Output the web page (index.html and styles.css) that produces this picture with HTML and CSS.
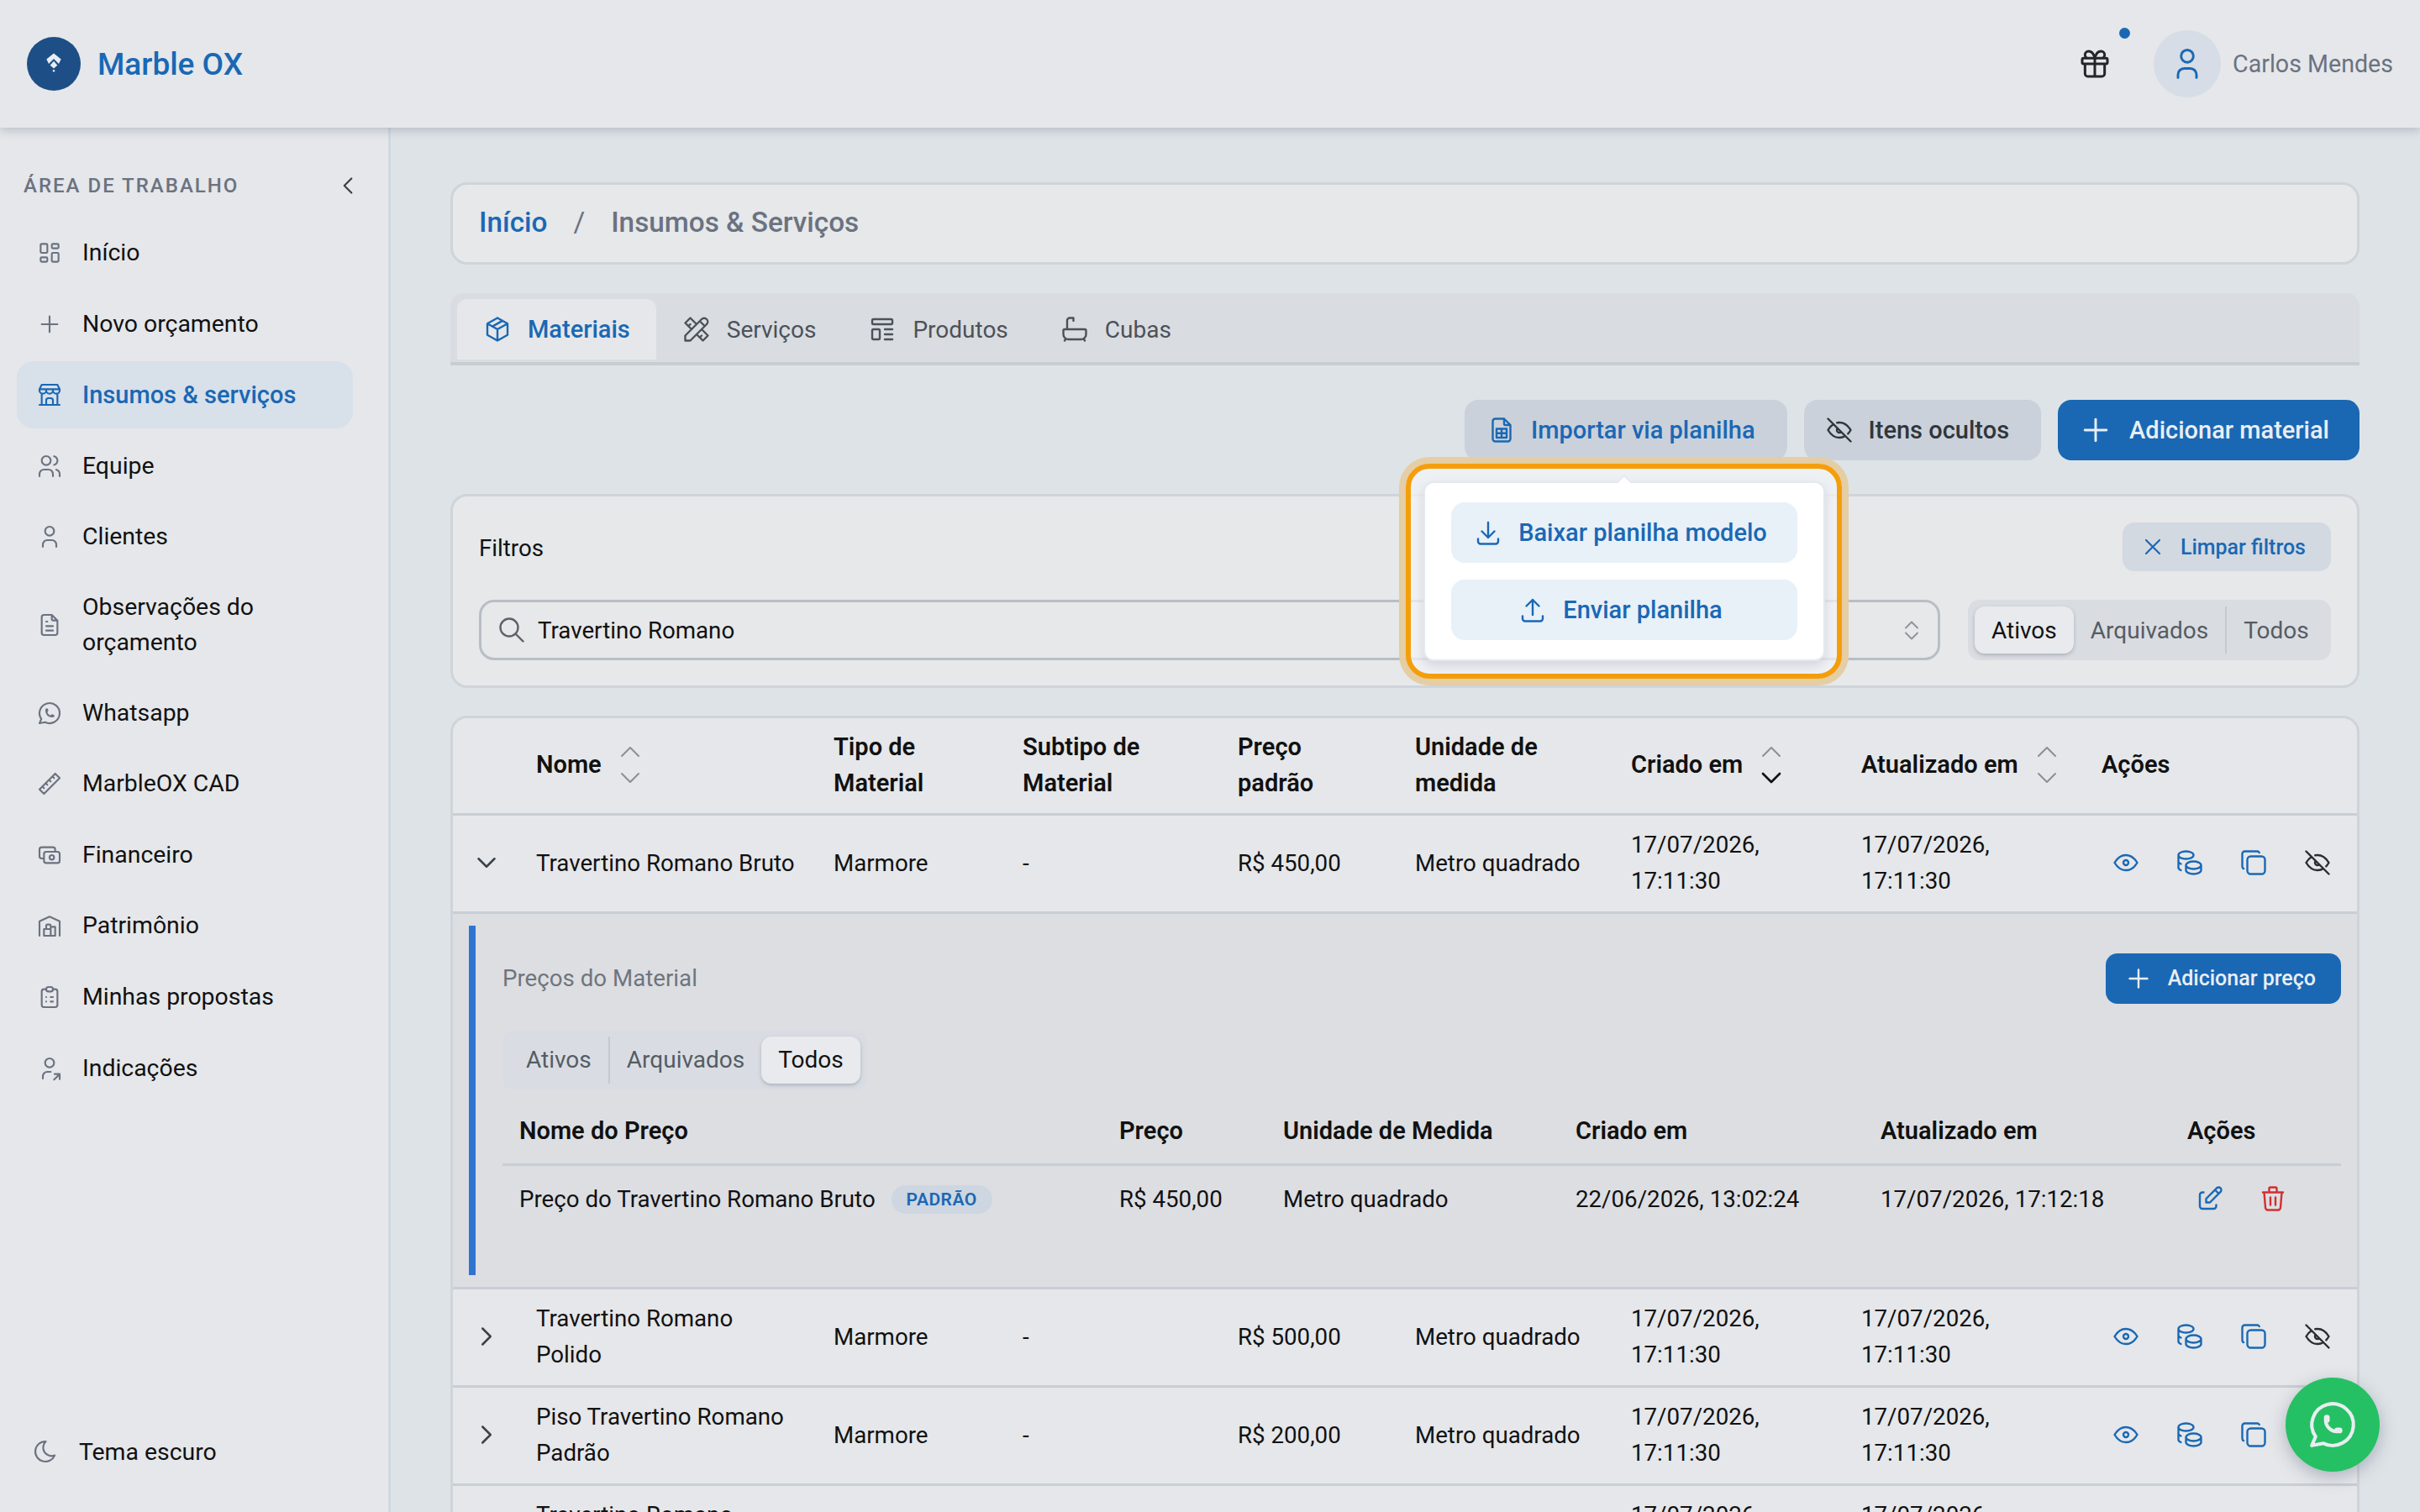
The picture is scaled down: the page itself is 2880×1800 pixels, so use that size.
FILE: index.html
```html
<!DOCTYPE html>
<html lang="pt-BR">
  <head>
    <meta charset="UTF-8" />
    <title>Marble OX</title>
    <link rel="stylesheet" href="styles.css">
  </head>
  <body>
    <svg class="sprite" xmlns="http://www.w3.org/2000/svg">
      <symbol id="i-dash" viewBox="0 0 24 24"><path d="M5 4h4a1 1 0 0 1 1 1v6a1 1 0 0 1-1 1H5a1 1 0 0 1-1-1V5a1 1 0 0 1 1-1M5 16h4a1 1 0 0 1 1 1v2a1 1 0 0 1-1 1H5a1 1 0 0 1-1-1v-2a1 1 0 0 1 1-1M15 12h4a1 1 0 0 1 1 1v6a1 1 0 0 1-1 1h-4a1 1 0 0 1-1-1v-6a1 1 0 0 1 1-1M15 4h4a1 1 0 0 1 1 1v2a1 1 0 0 1-1 1h-4a1 1 0 0 1-1-1V5a1 1 0 0 1 1-1"/></symbol>
      <symbol id="i-plus" viewBox="0 0 24 24"><path d="M12 5v14M5 12h14"/></symbol>
      <symbol id="i-store" viewBox="0 0 24 24"><path d="M3 21h18M3 7v1a3 3 0 0 0 6 0V7m0 1a3 3 0 0 0 6 0V7m0 1a3 3 0 0 0 6 0V7H3l2-4h14l2 4M5 21V10.85M19 21V10.85M9 21v-4a2 2 0 0 1 2-2h2a2 2 0 0 1 2 2v4"/></symbol>
      <symbol id="i-users" viewBox="0 0 24 24"><path d="M5 7a4 4 0 1 0 8 0a4 4 0 1 0-8 0M3 21v-2a4 4 0 0 1 4-4h4a4 4 0 0 1 4 4v2M16 3.13a4 4 0 0 1 0 7.75M21 21v-2a4 4 0 0 0-3-3.85"/></symbol>
      <symbol id="i-user" viewBox="0 0 24 24"><path d="M8 7a4 4 0 1 0 8 0a4 4 0 0 0-8 0M6 21v-2a4 4 0 0 1 4-4h4a4 4 0 0 1 4 4v2"/></symbol>
      <symbol id="i-note" viewBox="0 0 24 24"><path d="M14 3v4a1 1 0 0 0 1 1h4M17 21H7a2 2 0 0 1-2-2V5a2 2 0 0 1 2-2h7l5 5v11a2 2 0 0 1-2 2zM9 9h1M9 13h6M9 17h6"/></symbol>
      <symbol id="i-whats" viewBox="0 0 24 24"><path d="M3 21l1.65-3.8a9 9 0 1 1 3.4 2.9L3 21M9 10a.5.5 0 0 0 1 0V9a.5.5 0 0 0-1 0v1a5 5 0 0 0 5 5h1a.5.5 0 0 0 0-1h-1a.5.5 0 0 0 0 1"/></symbol>
      <symbol id="i-ruler" viewBox="0 0 24 24"><path d="M17 3l4 4L7 21l-4-4zM16 7l-1.500-1.500M13 10l-1.500-1.500M10 13l-1.500-1.500M7 16l-1.500-1.500"/></symbol>
      <symbol id="i-cash" viewBox="0 0 24 24"><path d="M7 11a2 2 0 0 1 2-2h10a2 2 0 0 1 2 2v6a2 2 0 0 1-2 2H9a2 2 0 0 1-2-2zM12 14a2 2 0 1 0 4 0a2 2 0 1 0-4 0M17 9V7a2 2 0 0 0-2-2H5a2 2 0 0 0-2 2v6a2 2 0 0 0 2 2h2"/></symbol>
      <symbol id="i-ware" viewBox="0 0 24 24"><path d="M3 21V8l9-4l9 4v13M13 13h4v8H7v-6h6M13 21v-9a1 1 0 0 0-1-1h-2a1 1 0 0 0-1 1v3"/></symbol>
      <symbol id="i-clip" viewBox="0 0 24 24"><path d="M9 5H7a2 2 0 0 0-2 2v12a2 2 0 0 0 2 2h10a2 2 0 0 0 2-2V7a2 2 0 0 0-2-2h-2M9 5a2 2 0 0 1 2-2h2a2 2 0 0 1 2 2a2 2 0 0 1-2 2h-2a2 2 0 0 1-2-2zM9 12h.01M13 12h2M9 16h.01M13 16h2"/></symbol>
      <symbol id="i-share" viewBox="0 0 24 24"><path d="M8 7a4 4 0 1 0 8 0a4 4 0 0 0-8 0M6 21v-2a4 4 0 0 1 4-4h3M16 22l5-5M21 21.500V17h-4.500"/></symbol>
      <symbol id="i-moon" viewBox="0 0 24 24"><path d="M12 3h.393a7.500 7.500 0 0 0 7.920 12.446a9 9 0 1 1-8.313-12.454z"/></symbol>
      <symbol id="i-gift" viewBox="0 0 24 24"><path d="M3 9a1 1 0 0 1 1-1h16a1 1 0 0 1 1 1v2a1 1 0 0 1-1 1H4a1 1 0 0 1-1-1zM12 8v13M19 12v7a2 2 0 0 1-2 2H7a2 2 0 0 1-2-2v-7M7.500 8a2.500 2.500 0 0 1 0-5A4.800 8 0 0 1 12 8a4.800 8 0 0 1 4.500-5a2.500 2.500 0 0 1 0 5"/></symbol>
      <symbol id="i-box" viewBox="0 0 24 24"><path d="M12 3l8 4.500v9L12 21l-8-4.500v-9L12 3M12 12l8-4.500M12 12v9M12 12L4 7.500M16 5.250l-8 4.500"/></symbol>
      <symbol id="i-tools" viewBox="0 0 24 24"><path d="M3 21h4L20 8a1.500 1.500 0 0 0-4-4L3 17v4M14.500 5.500l4 4M12 8L7 3L3 7l5 5M7 8L5.500 9.500M16 12l5 5l-4 4l-5-5M16 17l-1.500 1.500"/></symbol>
      <symbol id="i-list" viewBox="0 0 24 24"><path d="M4 5a1 1 0 0 1 1-1h14a1 1 0 0 1 1 1v2a1 1 0 0 1-1 1H5a1 1 0 0 1-1-1zM4 13a1 1 0 0 1 1-1h4a1 1 0 0 1 1 1v6a1 1 0 0 1-1 1H5a1 1 0 0 1-1-1zM14 12h6M14 16h6M14 20h6"/></symbol>
      <symbol id="i-bath" viewBox="0 0 24 24"><path d="M4 12h16a1 1 0 0 1 1 1v3a4 4 0 0 1-4 4H7a4 4 0 0 1-4-4v-3a1 1 0 0 1 1-1zM6 12V5a2 2 0 0 1 2-2h3v2.250M4 21l1-1.500M20 21l-1-1.500"/></symbol>
      <symbol id="i-sheet" viewBox="0 0 24 24"><path d="M14 3v4a1 1 0 0 0 1 1h4M17 21H7a2 2 0 0 1-2-2V5a2 2 0 0 1 2-2h7l5 5v11a2 2 0 0 1-2 2zM8 11h8v7H8zM8 14.500h8M12 11v7"/></symbol>
      <symbol id="i-eyeoff" viewBox="0 0 24 24"><path d="M10.585 10.587a2 2 0 0 0 2.829 2.828M16.681 16.673A8.717 8.717 0 0 1 12 18c-3.600 0-6.600-2-9-6c1.272-2.120 2.712-3.678 4.320-4.674m2.860-1.146A9.055 9.055 0 0 1 12 6c3.600 0 6.600 2 9 6c-.666 1.110-1.379 2.067-2.138 2.870M3 3l18 18"/></symbol>
      <symbol id="i-eye" viewBox="0 0 24 24"><path d="M10 12a2 2 0 1 0 4 0a2 2 0 0 0-4 0M21 12c-2.400 4-5.400 6-9 6c-3.600 0-6.600-2-9-6c2.400-4 5.400-6 9-6c3.600 0 6.600 2 9 6"/></symbol>
      <symbol id="i-coins" viewBox="0 0 24 24"><path d="M9 14c0 1.657 2.686 3 6 3s6-1.343 6-3s-2.686-3-6-3s-6 1.343-6 3zM9 14v4c0 1.656 2.686 3 6 3s6-1.344 6-3v-4M3 6c0 1.072 1.144 2.062 3 2.598s4.144.536 6 0c1.856-.536 3-1.526 3-2.598c0-1.072-1.144-2.062-3-2.598s-4.144-.536-6 0C4.144 3.938 3 4.928 3 6zM3 6v10c0 .888.772 1.450 2 2M3 11c0 .888.772 1.450 2 2"/></symbol>
      <symbol id="i-copy" viewBox="0 0 24 24"><path d="M7 9.667A2.667 2.667 0 0 1 9.667 7h8.666A2.667 2.667 0 0 1 21 9.667v8.666A2.667 2.667 0 0 1 18.333 21H9.667A2.667 2.667 0 0 1 7 18.333zM4.012 16.737A2.005 2.005 0 0 1 3 15V5c0-1.100.9-2 2-2h10c.75 0 1.158.385 1.500 1"/></symbol>
      <symbol id="i-edit" viewBox="0 0 24 24"><path d="M7 7H6a2 2 0 0 0-2 2v9a2 2 0 0 0 2 2h9a2 2 0 0 0 2-2v-1M20.385 6.585a2.100 2.100 0 0 0-2.970-2.970L9 12v3h3l8.385-8.415zM16 5l3 3"/></symbol>
      <symbol id="i-trash" viewBox="0 0 24 24"><path d="M4 7h16M10 11v6M14 11v6M5 7l1 12a2 2 0 0 0 2 2h8a2 2 0 0 0 2-2l1-12M9 7V4a1 1 0 0 1 1-1h4a1 1 0 0 1 1 1v3"/></symbol>
      <symbol id="i-down" viewBox="0 0 24 24"><path d="M4 17v2a2 2 0 0 0 2 2h12a2 2 0 0 0 2-2v-2M7 11l5 5l5-5M12 4v12"/></symbol>
      <symbol id="i-up" viewBox="0 0 24 24"><path d="M4 17v2a2 2 0 0 0 2 2h12a2 2 0 0 0 2-2v-2M7 9l5-5l5 5M12 4v12"/></symbol>
      <symbol id="i-search" viewBox="0 0 24 24"><path d="M3 10a7 7 0 1 0 14 0a7 7 0 1 0-14 0M21 21l-6-6"/></symbol>
      <symbol id="i-x" viewBox="0 0 24 24"><path d="M18 6L6 18M6 6l12 12"/></symbol>
      <symbol id="i-left" viewBox="0 0 24 24"><path d="M15 6l-6 6l6 6"/></symbol>
      <symbol id="i-right" viewBox="0 0 24 24"><path d="M9 6l6 6l-6 6"/></symbol>
      <symbol id="i-chev" viewBox="0 0 24 24"><path d="M6 9l6 6l6-6"/></symbol>
      <symbol id="i-caret-up" viewBox="0 0 24 24"><path d="M6 15l6-6l6 6"/></symbol>
    </svg>

    <header class="topbar">
      <div class="brand">
        <span class="brand_logo">
          <svg viewBox="0 2 24 24" class="brand_mark"><path d="M12 2.500l8 6.500-2.500 5L12 8.500 6.500 14 4 9zM12 11l4 4.500-4 3.500-4-3.500zM12 20.200l1.500 1.500-1.500 1.500-1.500-1.500z"/></svg>
        </span>
        <span class="brand_name">Marble OX</span>
      </div>
      <div class="topbar_right">
        <span class="gift">
          <svg class="icon gift_icon"><use href="#i-gift"/></svg>
          <span class="gift_dot"></span>
        </span>
        <span class="avatar"><svg class="icon avatar_icon"><use href="#i-user"/></svg></span>
        <span class="user_name">Carlos Mendes</span>
      </div>
    </header>

    <div class="shell">
      <aside class="sidebar">
        <div class="side_head">
          <span class="side_label">ÁREA DE TRABALHO</span>
          <svg class="icon side_toggle"><use href="#i-left"/></svg>
        </div>
        <nav class="side_nav">
          <a class="nav_item"><svg class="icon"><use href="#i-dash"/></svg><span>Início</span></a>
          <a class="nav_item"><svg class="icon"><use href="#i-plus"/></svg><span>Novo orçamento</span></a>
          <a class="nav_item nav_active"><svg class="icon"><use href="#i-store"/></svg><span>Insumos &amp; serviços</span></a>
          <a class="nav_item"><svg class="icon"><use href="#i-users"/></svg><span>Equipe</span></a>
          <a class="nav_item"><svg class="icon"><use href="#i-user"/></svg><span>Clientes</span></a>
          <a class="nav_item"><svg class="icon"><use href="#i-note"/></svg><span>Observações do<br>orçamento</span></a>
          <a class="nav_item"><svg class="icon"><use href="#i-whats"/></svg><span>Whatsapp</span></a>
          <a class="nav_item"><svg class="icon"><use href="#i-ruler"/></svg><span>MarbleOX CAD</span></a>
          <a class="nav_item"><svg class="icon"><use href="#i-cash"/></svg><span>Financeiro</span></a>
          <a class="nav_item"><svg class="icon"><use href="#i-ware"/></svg><span>Patrimônio</span></a>
          <a class="nav_item"><svg class="icon"><use href="#i-clip"/></svg><span>Minhas propostas</span></a>
          <a class="nav_item"><svg class="icon"><use href="#i-share"/></svg><span>Indicações</span></a>
        </nav>
        <a class="theme_toggle"><svg class="icon"><use href="#i-moon"/></svg><span>Tema escuro</span></a>
      </aside>

      <main class="content">
        <div class="crumbs">
          <span class="crumb_link">Início</span>
          <span class="crumb_sep">/</span>
          <span class="crumb_now">Insumos &amp; Serviços</span>
        </div>

        <div class="tabs">
          <span class="tab tab_active"><svg class="icon"><use href="#i-box"/></svg>Materiais</span>
          <span class="tab"><svg class="icon"><use href="#i-tools"/></svg>Serviços</span>
          <span class="tab"><svg class="icon"><use href="#i-list"/></svg>Produtos</span>
          <span class="tab"><svg class="icon"><use href="#i-bath"/></svg>Cubas</span>
        </div>

        <div class="actions">
          <div class="import_wrap">
            <button class="btn btn_soft btn_import"><svg class="icon"><use href="#i-sheet"/></svg>Importar via planilha</button>
            <div class="highlight">
              <div class="popover">
                <span class="popover_arrow"></span>
                <button class="pop_btn"><svg class="icon"><use href="#i-down"/></svg>Baixar planilha modelo</button>
                <button class="pop_btn"><svg class="icon"><use href="#i-up"/></svg>Enviar planilha</button>
              </div>
            </div>
          </div>
          <button class="btn btn_soft btn_dark"><svg class="icon"><use href="#i-eyeoff"/></svg>Itens ocultos</button>
          <button class="btn btn_primary"><svg class="icon"><use href="#i-plus"/></svg>Adicionar material</button>
        </div>

        <section class="filters">
          <div class="filters_top">
            <span class="filters_title">Filtros</span>
            <button class="btn_clear"><svg class="icon"><use href="#i-x"/></svg>Limpar filtros</button>
          </div>
          <div class="filters_row">
            <div class="search">
              <svg class="icon"><use href="#i-search"/></svg>
              <span class="search_text">Travertino Romano</span>
              <span class="updown">
                <svg class="icon"><use href="#i-caret-up"/></svg>
                <svg class="icon"><use href="#i-chev"/></svg>
              </span>
            </div>
            <div class="segment">
              <span class="seg seg_on">Ativos</span>
              <span class="seg">Arquivados</span>
              <span class="seg seg_div">Todos</span>
            </div>
          </div>
        </section>

        <section class="table_card">
          <table class="grid">
            <colgroup>
              <col class="c_exp"><col class="c_nome"><col class="c_tipo"><col class="c_sub"><col class="c_preco"><col class="c_uni"><col class="c_cri"><col class="c_atu"><col class="c_acao">
            </colgroup>
            <thead>
              <tr>
                <th></th>
                <th><span class="sort">Nome <span class="sort_arrows"><svg class="icon"><use href="#i-caret-up"/></svg><svg class="icon"><use href="#i-chev"/></svg></span></span></th>
                <th>Tipo de<br>Material</th>
                <th>Subtipo de<br>Material</th>
                <th>Preço<br>padrão</th>
                <th>Unidade de<br>medida</th>
                <th><span class="sort">Criado em <span class="sort_arrows"><svg class="icon"><use href="#i-caret-up"/></svg><svg class="icon sort_on"><use href="#i-chev"/></svg></span></span></th>
                <th><span class="sort">Atualizado em <span class="sort_arrows"><svg class="icon"><use href="#i-caret-up"/></svg><svg class="icon"><use href="#i-chev"/></svg></span></span></th>
                <th>Ações</th>
              </tr>
            </thead>
            <tbody>
              <tr>
                <td class="exp"><svg class="icon"><use href="#i-chev"/></svg></td>
                <td>Travertino Romano Bruto</td>
                <td>Marmore</td>
                <td>-</td>
                <td>R$ 450,00</td>
                <td>Metro quadrado</td>
                <td>17/07/2026,<br>17:11:30</td>
                <td>17/07/2026,<br>17:11:30</td>
                <td><span class="row_icons"><svg class="icon"><use href="#i-eye"/></svg><svg class="icon"><use href="#i-coins"/></svg><svg class="icon"><use href="#i-copy"/></svg><svg class="icon icon_dark"><use href="#i-eyeoff"/></svg></span></td>
              </tr>
              <tr class="detail_row">
                <td colspan="9">
                  <div class="detail">
                    <div class="detail_head">
                      <span class="detail_title">Preços do Material</span>
                      <button class="btn_small"><svg class="icon"><use href="#i-plus"/></svg>Adicionar preço</button>
                    </div>
                    <div class="segment segment_sub">
                      <span class="seg">Ativos</span>
                      <span class="seg seg_div">Arquivados</span>
                      <span class="seg seg_on">Todos</span>
                    </div>
                    <table class="subgrid">
                      <colgroup>
                        <col class="s_nome"><col class="s_preco"><col class="s_uni"><col class="s_cri"><col class="s_atu"><col class="s_acao">
                      </colgroup>
                      <thead>
                        <tr>
                          <th>Nome do Preço</th>
                          <th>Preço</th>
                          <th>Unidade de Medida</th>
                          <th>Criado em</th>
                          <th>Atualizado em</th>
                          <th>Ações</th>
                        </tr>
                      </thead>
                      <tbody>
                        <tr>
                          <td>Preço do Travertino Romano Bruto <span class="badge">PADRÃO</span></td>
                          <td>R$ 450,00</td>
                          <td>Metro quadrado</td>
                          <td>22/06/2026, 13:02:24</td>
                          <td>17/07/2026, 17:12:18</td>
                          <td><span class="price_icons"><svg class="icon"><use href="#i-edit"/></svg><svg class="icon icon_red"><use href="#i-trash"/></svg></span></td>
                        </tr>
                      </tbody>
                    </table>
                  </div>
                </td>
              </tr>
              <tr>
                <td class="exp"><svg class="icon"><use href="#i-right"/></svg></td>
                <td>Travertino Romano<br>Polido</td>
                <td>Marmore</td>
                <td>-</td>
                <td>R$ 500,00</td>
                <td>Metro quadrado</td>
                <td>17/07/2026,<br>17:11:30</td>
                <td>17/07/2026,<br>17:11:30</td>
                <td><span class="row_icons"><svg class="icon"><use href="#i-eye"/></svg><svg class="icon"><use href="#i-coins"/></svg><svg class="icon"><use href="#i-copy"/></svg><svg class="icon icon_dark"><use href="#i-eyeoff"/></svg></span></td>
              </tr>
              <tr>
                <td class="exp"><svg class="icon"><use href="#i-right"/></svg></td>
                <td>Piso Travertino Romano<br>Padrão</td>
                <td>Marmore</td>
                <td>-</td>
                <td>R$ 200,00</td>
                <td>Metro quadrado</td>
                <td>17/07/2026,<br>17:11:30</td>
                <td>17/07/2026,<br>17:11:30</td>
                <td><span class="row_icons"><svg class="icon"><use href="#i-eye"/></svg><svg class="icon"><use href="#i-coins"/></svg><svg class="icon"><use href="#i-copy"/></svg><svg class="icon icon_dark"><use href="#i-eyeoff"/></svg></span></td>
              </tr>
              <tr>
                <td class="exp"><svg class="icon"><use href="#i-right"/></svg></td>
                <td>Travertino Romano<br>Levigado</td>
                <td>Marmore</td>
                <td>-</td>
                <td>R$ 350,00</td>
                <td>Metro quadrado</td>
                <td>17/07/2026,<br>17:11:30</td>
                <td>17/07/2026,<br>17:11:30</td>
                <td><span class="row_icons"><svg class="icon"><use href="#i-eye"/></svg><svg class="icon"><use href="#i-coins"/></svg><svg class="icon"><use href="#i-copy"/></svg><svg class="icon icon_dark"><use href="#i-eyeoff"/></svg></span></td>
              </tr>
            </tbody>
          </table>
        </section>
      </main>
    </div>

    <button class="fab"><svg class="icon"><use href="#i-whats"/></svg></button>
  </body>
</html>
```

FILE: styles.css
```css
* {
  box-sizing: border-box;
}
html,
body {
  margin: 0;
  height: 100%;
  overflow: hidden;
}
body {
  display: flex;
  flex-direction: column;
  background-color: #dee3e7;
  color: #111;
  font-family: Roboto, "Liberation Sans", sans-serif;
  font-size: 27.700px;
  line-height: 43px;
}
.sprite {
  display: none;
}
.icon {
  width: 36px;
  height: 36px;
  flex: none;
  fill: none;
  stroke: currentColor;
  stroke-width: 1.6;
  stroke-linecap: round;
  stroke-linejoin: round;
}
button {
  font: inherit;
  border: none;
  cursor: pointer;
}

/* top bar */
.topbar {
  position: relative;
  z-index: 2;
  display: flex;
  justify-content: space-between;
  align-items: center;
  height: 152px;
  flex: none;
  padding: 0 32px;
  background-color: #e5e7ea;
  box-shadow: 0 4px 10px rgba(90, 100, 120, 0.28);
}
.brand {
  display: flex;
  align-items: center;
  gap: 20px;
}
.brand_logo {
  display: flex;
  justify-content: center;
  align-items: center;
  width: 64px;
  height: 64px;
  border-radius: 50%;
  background-color: #1d4f86;
}
.brand_mark {
  width: 26px;
  height: 26px;
  fill: #e8edf3;
}
.brand_name {
  color: #1a68b4;
  font-size: 37px;
  font-weight: 500;
}
.topbar_right {
  display: flex;
  align-items: center;
}
.gift {
  position: relative;
  display: flex;
  margin-right: 50px;
}
.gift_icon {
  width: 40px;
  height: 40px;
  color: #22262b;
  stroke-width: 1.8;
}
.gift_dot {
  position: absolute;
  top: -23px;
  right: -22px;
  width: 13px;
  height: 13px;
  border-radius: 50%;
  background-color: #1a68b4;
}
.avatar {
  display: flex;
  justify-content: center;
  align-items: center;
  width: 80px;
  height: 80px;
  border-radius: 50%;
  background-color: #d6dde6;
  color: #1a68b4;
}
.avatar_icon {
  width: 44px;
  height: 44px;
}
.user_name {
  margin-left: 14px;
  color: #6b7280;
  font-size: 28.600px;
}

/* sidebar */
.shell {
  display: flex;
  flex: 1;
  min-height: 0;
}
.sidebar {
  display: flex;
  flex-direction: column;
  width: 465px;
  flex: none;
  padding: 48px 42px 32px 20px;
  background-color: #e5e7ea;
  border-right: 3px solid #d0d8e2;
}
.side_head {
  display: flex;
  justify-content: space-between;
  align-items: center;
  height: 42px;
  margin-bottom: 19px;
  padding-left: 8px;
}
.side_label {
  color: #6b7280;
  font-size: 24px;
  font-weight: 500;
  letter-spacing: 2px;
}
.side_toggle {
  width: 34px;
  height: 34px;
  margin-right: -11px;
  color: #3c4249;
}
.side_nav {
  display: flex;
  flex-direction: column;
  gap: 4.6px;
  line-height: 42px;
}
.nav_item,
.theme_toggle {
  display: flex;
  align-items: center;
  gap: 23px;
  min-height: 80px;
  padding: 18px 23px;
  border-radius: 20px;
  color: #111;
  font-size: 28.400px;
}
.nav_item .icon,
.theme_toggle .icon {
  width: 32px;
  height: 32px;
  color: #6b7280;
}
.nav_active {
  background-color: #d8e0ea;
  color: #1a68b4;
  font-size: 29px;
  font-weight: 500;
}
.nav_active .icon {
  color: #1a68b4;
}
.theme_toggle {
  margin-top: auto;
  gap: 24px;
  padding-left: 18px;
}

/* content column */
.content {
  display: flex;
  flex-direction: column;
  flex: 1;
  min-width: 0;
  padding: 65px 72px 0 71px;
}
.crumbs {
  display: flex;
  align-items: center;
  gap: 31px;
  height: 98px;
  flex: none;
  margin-bottom: 34px;
  padding: 0 31px 3px;
  background-color: #e6e8ea;
  border: 3px solid #cfd4da;
  border-radius: 20px;
  font-size: 33.300px;
  font-weight: 500;
}
.crumb_link {
  color: #1a68b4;
}
.crumb_sep {
  color: #6b7280;
  font-weight: 400;
}
.crumb_now {
  color: #6b7280;
}
.tabs {
  display: flex;
  align-items: flex-end;
  height: 86px;
  flex: none;
  margin-bottom: 41px;
  padding-left: 8px;
  background-color: #d9dce1;
  border-bottom: 4px solid #c8cdd2;
  border-radius: 16px 16px 0 0;
}
.tab {
  display: flex;
  align-items: center;
  gap: 18px;
  height: 72px;
  margin-bottom: 3px;
  padding: 0 31px 0 30px;
  border-radius: 12px 12px 0 0;
  color: #4b5259;
  font-size: 28px;
}
.tab_active {
  background-color: #e5e7ea;
  color: #1a68b4;
  font-size: 29px;
  font-weight: 500;
}
.actions {
  display: flex;
  justify-content: flex-end;
  gap: 20px;
  flex: none;
  margin-bottom: 40px;
}
.import_wrap {
  position: relative;
}
.btn {
  display: flex;
  align-items: center;
  gap: 17px;
  height: 72px;
  padding: 0 38px 0 24px;
  border-radius: 16px;
  font-size: 29px;
  font-weight: 500;
}
.btn_soft {
  background-color: #cad1da;
}
.btn_import {
  padding-left: 26px;
  color: #1a68b4;
}
.btn_dark {
  color: #31363c;
}
.btn_primary {
  gap: 18px;
  padding: 0 36px 0 23px;
  background-color: #1a68b4;
  color: #e9eef4;
}
.btn_primary .icon {
  width: 44px;
  height: 44px;
}

/* the orange frame around the import menu */
.highlight {
  position: absolute;
  z-index: 3;
  top: 76px;
  left: -70px;
  width: 519px;
  height: 256px;
  border: 6px solid #f59e0b;
  border-radius: 28px;
  box-shadow: 0 0 0 8px #e5cda4;
  background-color: rgba(245, 247, 250, 0.7);
}
.popover {
  position: absolute;
  top: 15px;
  left: 15px;
  display: flex;
  flex-direction: column;
  gap: 20px;
  width: 478px;
  height: 214px;
  padding: 23px 31px;
  background-color: #fff;
  border: 2px solid #e4e9f0;
  border-radius: 12px;
  box-shadow: 0 6px 14px rgba(90, 100, 120, 0.2);
}
.popover_arrow {
  position: absolute;
  top: -8px;
  left: 231px;
  width: 12px;
  height: 12px;
  background-color: #fff;
  border-top: 2px solid #e4e9f0;
  border-left: 2px solid #e4e9f0;
  transform: rotate(45deg);
}
.pop_btn {
  position: relative;
  display: flex;
  justify-content: center;
  align-items: center;
  gap: 18px;
  height: 72px;
  padding: 0 10px 0 0;
  border-radius: 16px;
  background-color: #e8f0f8;
  color: #1a68b4;
  font-size: 29px;
  font-weight: 500;
}

/* filters */
.filters {
  display: flex;
  flex-direction: column;
  gap: 34px;
  flex: none;
  margin-bottom: 33px;
  padding: 31px 31px 30px;
  background-color: #e6e8ea;
  border: 3px solid #cfd4da;
  border-radius: 20px;
}
.filters_top {
  display: flex;
  justify-content: space-between;
  align-items: center;
}
.filters_title {
  padding-top: 2px;
}
.btn_clear {
  display: flex;
  align-items: center;
  gap: 17px;
  height: 58px;
  padding: 0 30px 0 20px;
  border-radius: 14px;
  background-color: #d3d9e1;
  color: #1a68b4;
  font-size: 25px;
  font-weight: 500;
}
.btn_clear .icon {
  width: 32px;
  height: 32px;
}
.filters_row {
  display: flex;
  gap: 33px;
}
.search {
  display: flex;
  align-items: center;
  flex: 1;
  height: 72px;
  padding: 0 17px 0 18px;
  border: 3px solid #b9bec5;
  border-radius: 18px;
}
.search > .icon {
  color: #5b6269;
}
.search_text {
  flex: 1;
  margin-left: 13px;
}
.updown {
  display: flex;
  flex-direction: column;
  color: #8f9399;
}
.updown .icon {
  width: 28px;
  height: 28px;
  margin: -7.500px 0;
}
.segment {
  display: flex;
  align-items: center;
  width: 432px;
  height: 72px;
  padding: 8px;
  border-radius: 14px;
  background-color: #d9dce1;
  color: #555c64;
  font-size: 28px;
}
.seg {
  display: flex;
  align-items: center;
  height: 56px;
  padding: 0 20px;
}
.seg_on {
  border-radius: 12px;
  background-color: #e8eaed;
  box-shadow: 0 2px 4px rgba(90, 100, 120, 0.35);
  color: #111;
}
.seg_div {
  border-left: 2px solid #c6cad0;
}

/* main table */
.table_card {
  flex: none;
  background-color: #e5e7ea;
  border: 3px solid #cfd4da;
  border-radius: 20px 20px 0 0;
}
.grid {
  width: 2266px;
  border-collapse: collapse;
  table-layout: fixed;
}
.c_exp { width: 81px; }
.c_nome { width: 354px; }
.c_tipo { width: 225px; }
.c_sub { width: 256px; }
.c_preco { width: 211px; }
.c_uni { width: 257px; }
.c_cri { width: 274px; }
.c_atu { width: 286px; }
.c_acao { width: 322px; }
.grid > thead > tr > th {
  height: 114px;
  padding: 0 18px 1px;
  border-bottom: 3px solid #c8ced5;
  font-size: 29px;
  font-weight: 600;
  text-align: left;
}
.grid > tbody > tr > td {
  height: 117px;
  padding: 0 18px 1px;
  border-bottom: 3px solid #c8ced5;
}
.sort {
  display: flex;
  align-items: center;
  gap: 14px;
  white-space: nowrap;
}
.sort_arrows {
  display: flex;
  flex-direction: column;
  color: #8a9097;
}
.sort_arrows .icon {
  width: 40px;
  height: 40px;
  margin: -4.500px 0;
  stroke-width: 1.200;
}
.sort_arrows .sort_on {
  color: #111;
  stroke-width: 1.600;
}
.exp {
  color: #3c4249;
}
.exp .icon {
  display: block;
  width: 38px;
  height: 38px;
  margin-left: 3px;
}
.row_icons {
  display: flex;
  gap: 40px;
  margin-left: 11px;
  color: #1a68b4;
}
.icon_dark {
  color: #2a2d31;
}

/* expanded row */
.grid > tbody > .detail_row > td {
  padding: 14px 0 14px 19px;
  height: auto;
  background-color: #dcdee2;
}
.detail {
  height: 416px;
  padding: 33px 19px 0 32px;
  border-left: 8px solid #2f74d0;
}
.detail_head {
  display: flex;
  justify-content: space-between;
  align-items: center;
  margin-bottom: 31px;
}
.detail_title {
  color: #6f757d;
}
.btn_small {
  display: flex;
  align-items: center;
  gap: 17px;
  height: 60px;
  padding: 0 30px 0 21px;
  border-radius: 14px;
  background-color: #1a68b4;
  color: #e9eef4;
  font-size: 25px;
  font-weight: 500;
}
.segment_sub {
  width: 434px;
  background-color: #d9dde3;
}
.subgrid {
  width: 2188px;
  border-collapse: collapse;
  table-layout: fixed;
}
.s_nome { width: 714px; }
.s_preco { width: 195px; }
.s_uni { width: 348px; }
.s_cri { width: 363px; }
.s_atu { width: 365px; }
.s_acao { width: 203px; }
.subgrid th {
  height: 89px;
  padding: 10px 20px 0;
  border-bottom: 3px solid #c8ced5;
  font-size: 29px;
  font-weight: 600;
  text-align: left;
}
.subgrid td {
  height: 80px;
  padding: 0 20px;
}
.badge {
  display: inline-block;
  height: 34px;
  margin-left: 12px;
  padding: 0 18px;
  border-radius: 17px;
  background-color: #cdd6e1;
  color: #1a68b4;
  font-size: 21px;
  font-weight: 600;
  line-height: 34px;
  letter-spacing: 0.5px;
  vertical-align: 2px;
}
.price_icons {
  display: flex;
  gap: 39px;
  margin-left: 9px;
  color: #1a68b4;
}
.icon_red {
  color: #d32f2f;
}

/* floating whatsapp button */
.fab {
  position: fixed;
  right: 48px;
  bottom: 48px;
  display: flex;
  justify-content: center;
  align-items: center;
  width: 112px;
  height: 112px;
  border-radius: 50%;
  background-color: #25c063;
  box-shadow: 0 6px 20px rgba(90, 100, 120, 0.4);
  color: #e8eef0;
}
.fab .icon {
  width: 66px;
  height: 66px;
  stroke-width: 1.500;
}
```
